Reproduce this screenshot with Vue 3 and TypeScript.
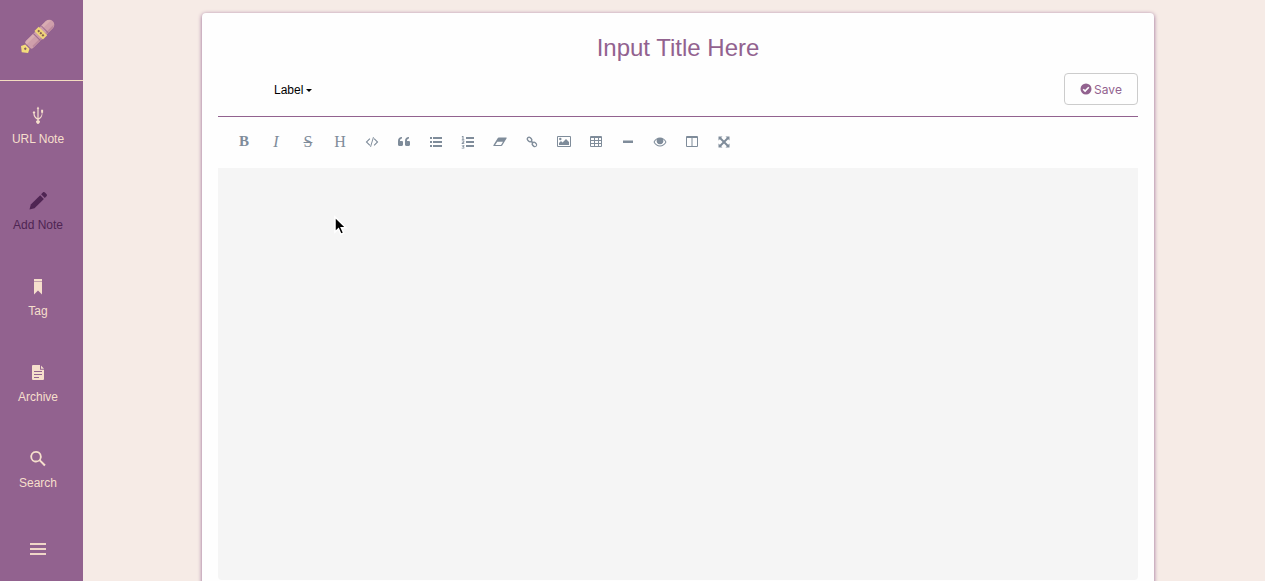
<script setup lang="ts">
import { ref } from 'vue'

type NavName = 'url' | 'add' | 'tag' | 'archive' | 'search'

interface NavItem {
  name: NavName
  label: string
  paths: string[]
}

interface Tool {
  name: string
  glyph?: string
  style?: string
  paths?: string[]
}

const navItems: NavItem[] = [
  {
    name: 'url',
    label: 'URL Note',
    paths: [
      'M10 1.500l1.300 2.200h-.7v9.600c2.300-1.500 3.100-2.700 3.200-5.600h-.7V4.800h2v2.900h-.6c0 3.600-1 5.200-3.900 7v.5a1.800 1.800 0 1 1-1.200 0v-.5C6.500 12.900 5.500 11.500 5.400 8.500a1.200 1.200 0 1 1 1.200 0c.1 2.500.9 3.500 2.800 4.800V3.700h-.7z',
    ],
  },
  {
    name: 'add',
    label: 'Add Note',
    paths: ['M1.500 18.500l1.300-4.900L12.200 4.200l3.700 3.700-9.400 9.400z', 'M13.100 3.300l1.700-1.700c.7-.7 1.700-.6 2.400.1l1.200 1.200c.7.7.8 1.700.1 2.400L16.800 7z'],
  },
  { name: 'tag', label: 'Tag', paths: ['M6 2h8v2H6z', 'M6 4.500h8v13L10 13.500 6 17.500z'] },
  {
    name: 'archive',
    label: 'Archive',
    paths: ['M5 2h7v4.700h4v9.300a1 1 0 0 1-1 1H5a1 1 0 0 1-1-1V3a1 1 0 0 1 1-1zM6 8v1h8V8zm0 3v1h8v-1zm0 3v1h5v-1z', 'M13 2.500L16 5.700h-3z'],
  },
  {
    name: 'search',
    label: 'Search',
    paths: [
      'M8 2a5.700 5.700 0 1 0 3.400 10.300l4.800 4.900 1.500-1.500-4.900-4.800A5.700 5.700 0 0 0 8 2zm0 1.800a3.900 3.900 0 1 1 0 7.800 3.900 3.900 0 0 1 0-7.800z',
    ],
  },
]

const tools: Tool[] = [
  { name: 'Bold', glyph: 'B', style: 'bold' },
  { name: 'Italic', glyph: 'I', style: 'italic' },
  { name: 'Strikethrough', glyph: 'S', style: 'strike' },
  { name: 'Heading', glyph: 'H', style: 'heading' },
  { name: 'Code', paths: ['M4.500 3.200l.8.8L2.300 7l3 3-.8.800L.7 7zM9.500 3.200l-.8.8 3 3-3 3 .8.800L13.300 7zM8 2l.9.300-2.900 9.700-.9-.300z'] },
  {
    name: 'Quote',
    paths: [
      'M1 6c0-2.500 1.500-4 4-4v1.500C3.700 3.500 3 4.500 3 6h1.800c.7 0 1.200.5 1.200 1.200v2.600c0 .7-.5 1.200-1.200 1.200H2.200C1.500 11 1 10.500 1 9.800z',
      'M8 6c0-2.500 1.500-4 4-4v1.500c-1.300 0-2 1-2 2.500h1.800c.7 0 1.200.5 1.200 1.200v2.600c0 .7-.5 1.200-1.200 1.200H9.200C8.500 11 8 10.500 8 9.800z',
    ],
  },
  {
    name: 'Bulleted list',
    paths: ['M1 2h2v2H1zM1 6h2v2H1zM1 10h2v2H1zM4 2h9v2H4zM4 6h9v2H4zM4 10h9v2H4z'],
  },
  {
    name: 'Numbered list',
    paths: ['M5 2h8v2H5zM5 6h8v2H5zM5 10h8v2H5z', 'M1.500 1h1v3h.8v.7H.8V4h.7V2l-.7.3v-.7zM.8 5.500h2.500v1.700L2 8.200h1.300V9H.7v-.9l1.700-1.400v-.5H.8zM.7 9.900h2.600v1.300l-.4.500.4.500v1.200H.7v-.7h1.800V12H1.300v-.7h1.200v-.7H.7z'],
  },
  { name: 'Eraser', paths: ['M5.700 2.500H13c.6 0 .9.500.5 1L9.200 10.600c-.2.300-.5.400-.8.400H1c-.6 0-.9-.5-.5-1l4.300-7c.2-.3.500-.5.900-.5zM2.200 10H8l2-3.200H4.300z'] },
  {
    name: 'Link',
    paths: [
      'M2.300 2.300a2.500 2.500 0 0 1 3.500 0l1 1a2.500 2.500 0 0 1 .5 2.800l.6.6a2.500 2.500 0 0 1 2.800.5l1 1a2.500 2.500 0 0 1-3.500 3.500l-1-1a2.500 2.500 0 0 1-.5-2.800l-.6-.6a2.500 2.500 0 0 1-2.800-.5l-1-1a2.500 2.500 0 0 1 0-3.500zm1 1a1 1 0 0 0 0 1.500l1 1a1 1 0 0 0 1.500-1.500l-1-1a1 1 0 0 0-1.500 0zm5 5a1 1 0 0 0 0 1.500l1 1a1 1 0 0 0 1.500-1.500l-1-1a1 1 0 0 0-1.500 0z',
    ],
  },
  {
    name: 'Image',
    paths: ['M1 1h12a1 1 0 0 1 1 1v9a1 1 0 0 1-1 1H1a1 1 0 0 1-1-1V2a1 1 0 0 1 1-1zm0 1v9h12V2z', 'M2 10V8l2-2 1.500 1.500L9 4l3 3v3z', 'M4.500 4a1.200 1.200 0 1 1-2.400 0 1.200 1.200 0 0 1 2.400 0z'],
  },
  {
    name: 'Table',
    paths: ['M2 1h10a1 1 0 0 1 1 1v9a1 1 0 0 1-1 1H2a1 1 0 0 1-1-1V2a1 1 0 0 1 1-1zM2 3v2h3V3zm4 0v2h3V3zm4 0v2h2V3zM2 6v2h3V6zm4 0v2h3V6zm4 0v2h2V6zM2 9v2h3V9zm4 0v2h3V9zm4 0v2h2V9z'],
  },
  { name: 'Divider', paths: ['M2 5.500h10v2.500H2z'] },
  {
    name: 'Preview',
    paths: ['M7 2.500c2.800 0 5 1.700 6.500 4.500-1.500 2.800-3.700 4.500-6.500 4.500S2 9.800.5 7C2 4.200 4.200 2.500 7 2.500zM4 4.300C3 5 2.200 5.900 1.600 7c1.200 2.100 3.100 3.500 5.400 3.500s4.200-1.400 5.400-3.500A7 7 0 0 0 10 4.300a3.400 3.400 0 1 1-6 0z', 'M4.300 5.800a2.700 2.700 0 1 0 5.400 0C9.700 4.300 8.500 3.200 7 3v1.200c-.9 0-1.500.6-1.500 1.600z'],
  },
  { name: 'Split view', paths: ['M2 1h10a1 1 0 0 1 1 1v9a1 1 0 0 1-1 1H2a1 1 0 0 1-1-1V2a1 1 0 0 1 1-1zm0 2v8h4.500V3zm5.500 0v8H12V3z'] },
  {
    name: 'Full screen',
    paths: ['M1.500 1.500h4L4.200 2.800 7 5.600l2.800-2.800-1.300-1.300h4v4l-1.300-1.300L8.400 7l2.800 2.800 1.300-1.300v4h-4l1.300-1.300L7 8.400l-2.800 2.800 1.300 1.300h-4v-4l1.300 1.300L5.600 7 2.800 4.200 1.500 5.500z'],
  },
]

const active = ref<NavName>('add')
const title = ref('')
const body = ref('')
</script>

<template>
  <div class="page">
    <aside class="sidebar">
      <a class="brand" href="#" aria-label="Home">
        <svg width="36" height="38" viewBox="0 0 36 38" aria-hidden="true">
          <g transform="translate(18 19) rotate(45)">
            <path d="M-5-16a5 5 0 0 1 10 0v28a2 2 0 0 1-2 2h-6a2 2 0 0 1-2-2z" fill="#cf9fab" />
            <path d="M-5-9V-16a5 5 0 0 1 3-4v11z" fill="#d9adb2" />
            <path d="M-5 2h3v12h-1a2 2 0 0 1-2-2z" fill="#d9adb2" />
            <path d="M3-19a5 5 0 0 1 2 4v26H3z" fill="#bd8a9e" />
            <path d="M-5-10H5v1H-5zM-5 1H5v1H-5z" fill="#9c6a91" />
            <rect x="-6" y="-7" width="12" height="6" fill="#f0d579" />
            <path d="M-4-5h2v2h-2zM-1-5h2v2h-2zM2-5h2v2H2z" fill="#87604f" />
            <path d="M-3 15h6l2 4-5 4-5-4z" fill="#f4dc7b" />
            <path d="M-1 17h2v2h-2z" fill="#86605d" />
          </g>
        </svg>
      </a>
      <nav class="nav">
        <a
          v-for="item in navItems"
          :key="item.name"
          href="#"
          class="nav-item"
          :class="{ active: active === item.name }"
          @click.prevent="active = item.name"
        >
          <svg width="20" height="20" viewBox="0 0 20 20" aria-hidden="true">
            <path v-for="d in item.paths" :key="d" :d="d" fill="currentColor" fill-rule="evenodd" />
          </svg>
          <span>{{ item.label }}</span>
        </a>
      </nav>
      <button class="menu" type="button" aria-label="Menu">
        <span></span><span></span><span></span>
      </button>
    </aside>

    <main class="main">
      <form class="card" @submit.prevent>
        <input v-model="title" class="title" type="text" placeholder="Input Title Here" aria-label="Title" />
        <div class="actions">
          <button class="label" type="button">Label<span class="caret"></span></button>
          <button class="save" type="submit">
            <svg width="12" height="12" viewBox="0 0 12 12" aria-hidden="true">
              <circle cx="6" cy="6" r="5.500" fill="currentColor" />
              <path d="M3.200 6.200l1.900 1.900 3.700-3.900" fill="none" stroke="#fff" stroke-width="1.600" />
            </svg>
            Save
          </button>
        </div>
        <div class="toolbar" role="toolbar" aria-label="Formatting">
          <button v-for="tool in tools" :key="tool.name" type="button" class="tool" :class="tool.style" :aria-label="tool.name">
            <template v-if="tool.glyph">{{ tool.glyph }}</template>
            <svg v-else width="14" height="14" viewBox="0 0 14 14" aria-hidden="true">
              <path v-for="d in tool.paths" :key="d" :d="d" fill="currentColor" fill-rule="evenodd" />
            </svg>
          </button>
        </div>
        <textarea v-model="body" class="editor" aria-label="Note"></textarea>
      </form>
    </main>

    <svg class="pointer" width="16" height="22" viewBox="0 0 16 22" aria-hidden="true">
      <path d="M2 2v15l3.500-3.200 2.400 5.400 2.800-1.200-2.400-5.200H13z" fill="#000" stroke="#fff" stroke-width="1.500" />
    </svg>
  </div>
</template>

<style>
body {
  margin: 0;
  background: #f6ebe6;
}
</style>

<style scoped>
.page {
  position: relative;
  display: flex;
  height: 100vh;
  overflow: hidden;
  font-family: "Liberation Sans", Arial, sans-serif;
  font-size: 12px;
}
.page * {
  box-sizing: border-box;
}
button,
input,
textarea {
  margin: 0;
  padding: 0;
  border: 0;
  background: none;
  font: inherit;
}
.sidebar {
  flex: 0 0 83px;
  display: flex;
  flex-direction: column;
  background: #92628f;
  color: #f6dfcc;
}
.brand {
  flex: none;
  height: 81px;
  padding: 17px 0 0 20px;
  border-bottom: 1px solid #f3dcc0;
}
.brand svg {
  display: block;
}
.nav {
  display: flex;
  flex-direction: column;
  padding-right: 7px;
}
.nav-item {
  display: flex;
  flex-direction: column;
  align-items: center;
  gap: 7px;
  height: 86px;
  padding-top: 24px;
  line-height: 14px;
  color: inherit;
  text-decoration: none;
}
.nav-item.active {
  color: #4f2553;
}
.menu {
  display: flex;
  flex-direction: column;
  gap: 3px;
  width: 16px;
  margin: 32px 0 0 30px;
}
.menu span {
  height: 2px;
  background: #f0d6c8;
}
.main {
  flex: 1;
  padding: 13px 111px 0 119px;
}
.card {
  display: flex;
  flex-direction: column;
  padding: 16px;
  border-radius: 4px;
  background: #fefefe;
  box-shadow: 0 1px 4px #92628f;
}
.title {
  width: 100%;
  height: 37px;
  color: #92628f;
  font-size: 24px;
  text-align: center;
}
.title::placeholder {
  color: #92628f;
  opacity: 1;
}
.title:focus,
.editor:focus {
  outline: none;
}
.actions {
  display: flex;
  align-items: center;
  justify-content: space-between;
  height: 51px;
  padding: 0 0 4px 56px;
  border-bottom: 1px solid #92628f;
}
.label {
  display: flex;
  align-items: center;
  gap: 3px;
  height: 32px;
  padding-top: 2px;
  color: #000;
}
.caret {
  border-top: 3px solid #000;
  border-right: 3px solid transparent;
  border-left: 3px solid transparent;
}
.save {
  display: flex;
  align-items: center;
  justify-content: center;
  gap: 2px;
  width: 74px;
  height: 32px;
  border: 1px solid #ccc;
  border-radius: 4px;
  color: #92628f;
  font-family: Inter, "Liberation Sans", sans-serif;
}
.toolbar {
  display: flex;
  align-items: center;
  height: 51px;
  padding: 0 10px 2px;
}
.tool {
  display: flex;
  align-items: center;
  justify-content: center;
  width: 32px;
  height: 32px;
  color: #7f8c9a;
  font-family: "Liberation Serif", serif;
  font-size: 16px;
}
.bold {
  font-size: 15px;
  font-weight: bold;
}
.italic {
  font-style: italic;
}
.strike {
  text-decoration: line-through;
}
.editor {
  display: block;
  width: 100%;
  height: calc(100vh - 169px);
  min-height: 240px;
  padding: 16px 20px;
  border-radius: 0 0 4px 4px;
  background: #f5f5f5;
  resize: none;
}
.pointer {
  position: absolute;
  top: 215px;
  left: 333px;
  pointer-events: none;
}
</style>
